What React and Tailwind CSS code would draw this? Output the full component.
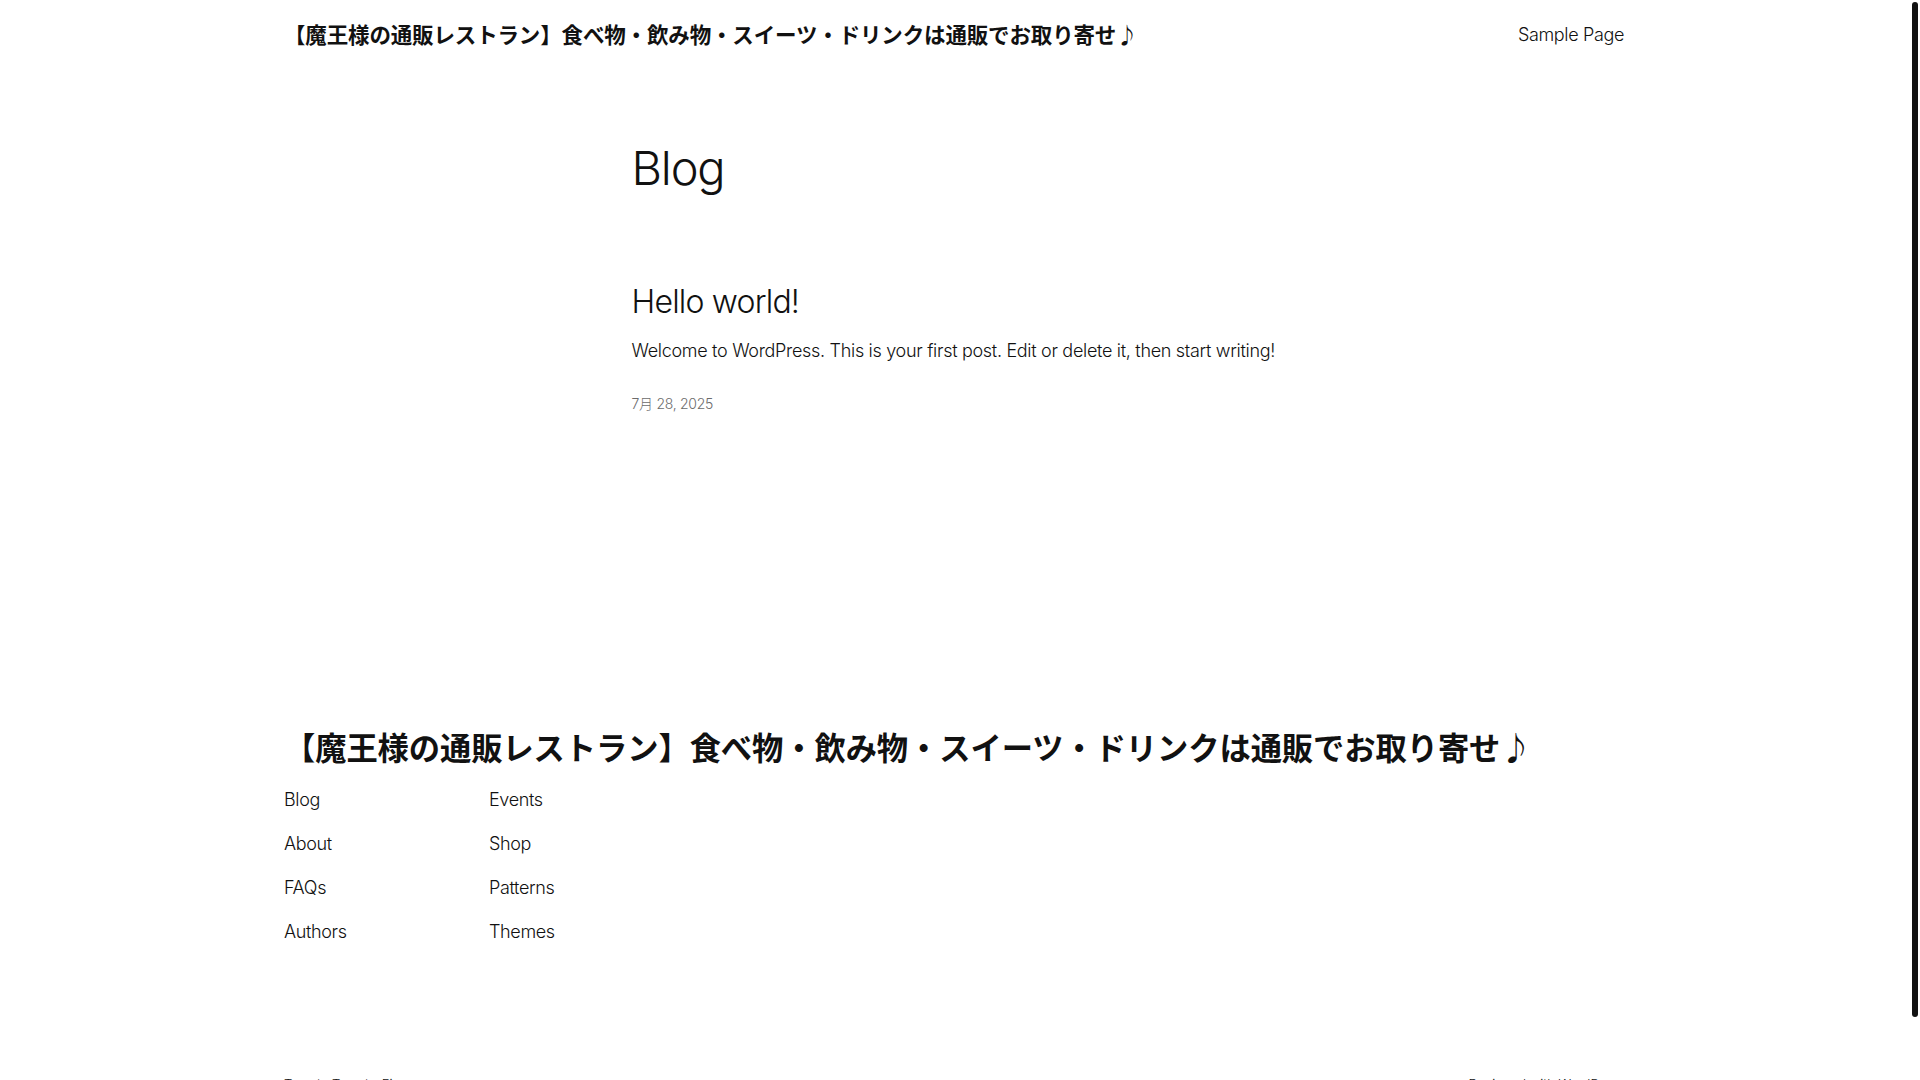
const siteTitle = '【魔王様の通販レストラン】食べ物・飲み物・スイーツ・ドリンクは通販でお取り寄せ♪';

const footerCols = [
  ['Blog', 'About', 'FAQs', 'Authors'],
  ['Events', 'Shop', 'Patterns', 'Themes'],
];

export default function App() {
  return (
    <div className="flex h-screen overflow-hidden bg-white text-[#111] font-['Inter','Noto_Sans_CJK_JP',sans-serif]">
      <div className="flex-1 min-w-0">
        {/* header */}
        <header className="w-[1340px] mx-auto h-[69px] flex items-center justify-between">
          <a className="font-['Noto_Sans_CJK_JP',sans-serif] font-bold text-[21.5px] tracking-[-0.007em]">{siteTitle}</a>
          <nav className="text-[18px] font-light tracking-[-0.02em]">Sample Page</nav>
        </header>

        {/* main */}
        <main className="w-[645px] mx-auto">
          <h1 className="pt-[73px] text-[47px] leading-[1.1] font-light tracking-[-0.025em]">Blog</h1>
          <article className="mt-[89px]">
            <h2 className="text-[32px] leading-[1.2] font-light tracking-[-0.025em]">Hello world!</h2>
            <p className="mt-[16px] text-[18px] leading-[1.6] font-light tracking-[-0.017em] whitespace-nowrap">
              Welcome to WordPress. This is your first post. Edit or delete it, then start writing!
            </p>
            <div className="mt-[28px] text-[14px] leading-[1.4] font-light text-[#6b6b6b] tracking-[-0.02em]">7月 28, 2025</div>
          </article>
        </main>

        {/* footer */}
        <footer className="w-[1340px] mx-auto mt-[315px]">
          <div className="font-['Noto_Sans_CJK_JP',sans-serif] font-bold text-[31.3px] leading-[1.2] tracking-[-0.003em]">{siteTitle}</div>
          <div className="flex mt-[20px]">
            {footerCols.map((col, i) => (
              <ul key={i} className="w-[205px] flex flex-col gap-[15.2px]">
                {col.map((item) => (
                  <li key={item} className="text-[18px] leading-[1.6] font-light tracking-[-0.02em]">{item}</li>
                ))}
              </ul>
            ))}
          </div>
          <div className="mt-[128px] flex justify-between text-[13px] font-light">
            <span>Twenty Twenty-Five</span>
            <span>Designed with WordPress</span>
          </div>
        </footer>
      </div>

      {/* scrollbar */}
      <div className="w-[12px] shrink-0 pt-[2px] pl-[4px]">
        <div className="w-[6px] h-[1015px] rounded-full bg-[#111]" />
      </div>
    </div>
  );
}
